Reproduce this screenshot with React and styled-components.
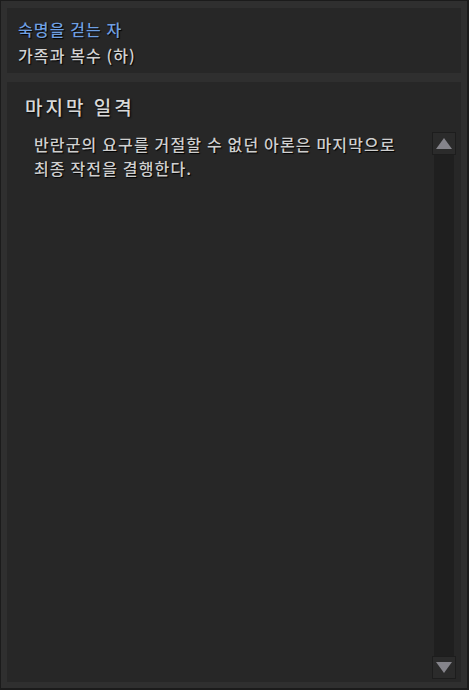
import React from 'react';
import styled, { createGlobalStyle } from 'styled-components';

const GlobalStyle = createGlobalStyle`
  html, body {
    margin: 0;
    padding: 0;
    background: #1b1b1b;
  }
  body {
    font-family: 'Noto Sans CJK KR', 'Noto Sans', sans-serif;
  }
`;

const Frame = styled.div`
  box-sizing: border-box;
  width: 469px;
  height: 690px;
  border: 1px solid #1b1b1b;
  border-bottom-width: 2px;
  border-right-width: 2px;
  background: #2f2f2f;
  padding: 7px 6px 6px 6px;
  display: flex;
  flex-direction: column;
  gap: 9px;
`;

const Panel = styled.div`
  background: #272727;
  box-sizing: border-box;
`;

const Header = styled(Panel)`
  height: 65px;
  padding: 9px 0 0 11px;
  display: flex;
  flex-direction: column;
  gap: 2px;
`;

const Line = styled.div`
  font-size: 16px;
  font-weight: 500;
  line-height: 24px;
  letter-spacing: 1.1px;
  color: ${(p) => (p.accent ? '#6f9fe0' : '#d2d2d2')};
  text-shadow: 1px 1px 1px #000;
`;

const Content = styled(Panel)`
  flex: 1;
  display: flex;
  padding: 12px 5px 3px 18px;
`;

const Body = styled.div`
  flex: 1;
  display: flex;
  flex-direction: column;
`;

const Title = styled.div`
  font-size: 19px;
  font-weight: 500;
  line-height: 26px;
  letter-spacing: 3px;
  color: #d8d8d8;
  text-shadow: 1px 1px 2px #000;
`;

const Text = styled.p`
  margin: 12px 0 0 9px;
  font-size: 16px;
  font-weight: 500;
  line-height: 24px;
  letter-spacing: 1.15px;
  color: #cfcfcf;
  text-shadow: 1px 1px 1px #000;
`;

const Scrollbar = styled.div`
  width: 24px;
  margin-top: 38px;
  display: flex;
  flex-direction: column;
  align-items: center;
`;

const ScrollButton = styled.div`
  box-sizing: border-box;
  width: 24px;
  height: 23px;
  background: #2b2b2b;
  border: 1px solid #1d1d1d;
  display: flex;
  align-items: center;
  justify-content: center;
`;

const Track = styled.div`
  flex: 1;
  width: 20px;
  background: #1f1f1f;
`;

const Arrow = ({ down }) => (
  <svg width="16" height="11" viewBox="0 0 16 11">
    <polygon
      points={down ? '0,0 16,0 8,11' : '8,0 16,11 0,11'}
      fill="#85848b"
    />
  </svg>
);

export default function App() {
  return (
    <>
      <GlobalStyle />
      <Frame>
        <Header>
          <Line accent>숙명을 걷는 자</Line>
          <Line>가족과 복수 (하)</Line>
        </Header>
        <Content>
          <Body>
            <Title>마지막 일격</Title>
            <Text>
              반란군의 요구를 거절할 수 없던 아론은 마지막으로
              <br />
              최종 작전을 결행한다.
            </Text>
          </Body>
          <Scrollbar>
            <ScrollButton>
              <Arrow />
            </ScrollButton>
            <Track />
            <ScrollButton>
              <Arrow down />
            </ScrollButton>
          </Scrollbar>
        </Content>
      </Frame>
    </>
  );
}
